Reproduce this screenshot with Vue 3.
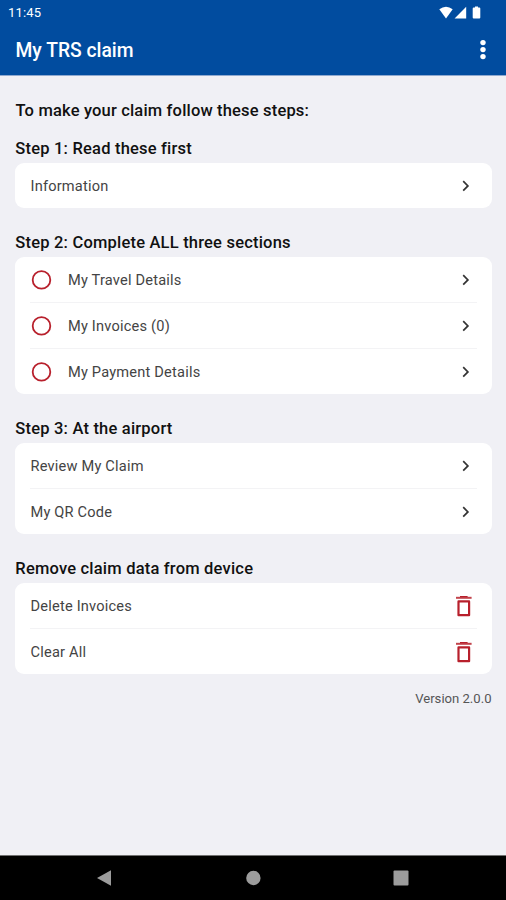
<script setup>
const sections = [
  { title: 'Step 1: Read these first', rows: [{ label: 'Information', icon: 'chevron' }] },
  {
    title: 'Step 2: Complete ALL three sections',
    rows: [
      { label: 'My Travel Details', icon: 'chevron', status: true },
      { label: 'My Invoices (0)', icon: 'chevron', status: true },
      { label: 'My Payment Details', icon: 'chevron', status: true },
    ],
  },
  {
    title: 'Step 3: At the airport',
    rows: [
      { label: 'Review My Claim', icon: 'chevron' },
      { label: 'My QR Code', icon: 'chevron' },
    ],
  },
  {
    title: 'Remove claim data from device',
    rows: [
      { label: 'Delete Invoices', icon: 'trash' },
      { label: 'Clear All', icon: 'trash' },
    ],
  },
]
</script>

<template>
  <div class="screen">
    <header class="header">
      <div class="status-bar">
        <span class="time">11:45</span>
        <svg class="status-icons" width="44" height="14" viewBox="0 0 44 14" fill="#fff">
          <path d="M0.3 3.2Q7-1.8 13.7 3.2L7 12.4Z" />
          <path d="M27.2 0.8V12.4H15.6Z" />
          <path d="M36 1.6V0.5h3v1.1h1.3q1 0 1 1v9q0 1-1 1h-5.6q-1 0-1-1v-9q0-1 1-1Z" />
        </svg>
      </div>
      <div class="app-bar">
        <h1>My TRS claim</h1>
        <svg class="more" width="6" height="22" viewBox="0 0 6 22" fill="#fff">
          <circle cx="3" cy="3.6" r="2.7" />
          <circle cx="3" cy="10.6" r="2.7" />
          <circle cx="3" cy="17.6" r="2.7" />
        </svg>
      </div>
    </header>

    <main class="content">
      <p class="intro">To make your claim follow these steps:</p>
      <section v-for="section in sections" :key="section.title" class="section">
        <h2>{{ section.title }}</h2>
        <ul class="card">
          <li v-for="row in section.rows" :key="row.label" class="row">
            <svg v-if="row.status" class="status" width="22" height="22" viewBox="0 0 22 22">
              <circle cx="11.5" cy="10.9" r="8.8" fill="none" stroke="#b8202c" stroke-width="1.8" />
            </svg>
            <span class="label">{{ row.label }}</span>
            <svg v-if="row.icon === 'chevron'" class="chevron" width="8" height="12" viewBox="0 0 8 12">
              <path d="M1.2 1.2 5.9 5.9 1.2 10.6" fill="none" stroke="#333" stroke-width="1.7" />
            </svg>
            <svg v-else class="trash" width="18" height="22" viewBox="0 0 18 22">
              <path d="M1 2.8H16.6" stroke="#c2444c" stroke-width="2" />
              <path d="M5 1.6H12.6" stroke="#b8202c" stroke-width="1.2" />
              <path d="M3.5 6.4H14.1V20.2H3.5Z" fill="none" stroke="#b8202c" stroke-width="2.2" stroke-linejoin="round" />
            </svg>
          </li>
        </ul>
      </section>
      <p class="version">Version 2.0.0</p>
    </main>

    <nav class="nav-bar">
      <svg width="16" height="18" viewBox="0 0 16 18"><path d="M1 9 15 1.2V16.8Z" fill="#9c9c9c" /></svg>
      <svg width="16" height="16" viewBox="0 0 16 16"><circle cx="8.4" cy="8" r="7.2" fill="#9c9c9c" /></svg>
      <svg width="16" height="16" viewBox="0 0 16 16"><rect x="0.5" y="0.5" width="15" height="15" rx="1" fill="#9c9c9c" /></svg>
    </nav>
  </div>
</template>

<style>
body {
  margin: 0;
  background: #f0f0f5;
}
</style>

<style scoped>
.screen {
  display: flex;
  flex-direction: column;
  height: 900px;
  overflow: hidden;
  background: #f0f0f5;
  color: #111;
  font-family: Roboto, sans-serif;
}
h1, h2, p, ul {
  margin: 0;
  padding: 0;
}
svg {
  display: block;
  flex: none;
}
.header {
  box-sizing: border-box;
  height: 76px;
  flex: none;
  background: #014c9f;
  border-bottom: 1px solid #8fa9d0;
  color: #fff;
}
.status-bar {
  display: flex;
  align-items: center;
  justify-content: space-between;
  height: 25px;
  padding: 0 23px 0 8px;
}
.time {
  font-size: 13px;
  line-height: 25px;
  letter-spacing: 0.2px;
}
.app-bar {
  display: flex;
  align-items: center;
  justify-content: space-between;
  height: 50px;
  padding: 0 20px 0 15.5px;
}
h1 {
  padding-top: 2px;
  font-size: 19.3px;
  font-weight: 500;
  line-height: 50px;
}
.content {
  flex: 1;
  padding: 25px 14.5px 0 15px;
}
.intro {
  height: 32px;
  padding-left: 0.5px;
  font-size: 16.5px;
  font-weight: 500;
  line-height: 20px;
  letter-spacing: 0.17px;
}
.section {
  margin-bottom: 19px;
}
h2 {
  height: 30px;
  padding-left: 0.3px;
  font-size: 16.5px;
  font-weight: 500;
  line-height: 32px;
  letter-spacing: 0.2px;
}
.card {
  list-style: none;
  border-radius: 9px;
  background: #fff;
  padding: 0 15px;
}
.row {
  box-sizing: border-box;
  display: flex;
  align-items: center;
  height: 46px;
  border-bottom: 1px solid #f3f3f5;
}
.row:last-child {
  height: 45px;
  border-bottom: 0;
}
.label {
  flex: 1;
  padding: 1px 0 0 0.5px;
  font-size: 14.6px;
  letter-spacing: 0.2px;
  color: #444;
}
.status {
  margin-right: 15.5px;
}
.chevron {
  margin-right: 7px;
}
.trash {
  margin-right: 4px;
}
.version {
  margin-top: -2px;
  font-size: 13.1px;
  line-height: 16px;
  text-align: right;
  color: #555;
}
.nav-bar {
  box-sizing: border-box;
  display: flex;
  justify-content: space-between;
  align-items: center;
  height: 45px;
  padding: 0 97px 0 96px;
  background: #000;
  border-top: 1px solid #707070;
}
</style>
